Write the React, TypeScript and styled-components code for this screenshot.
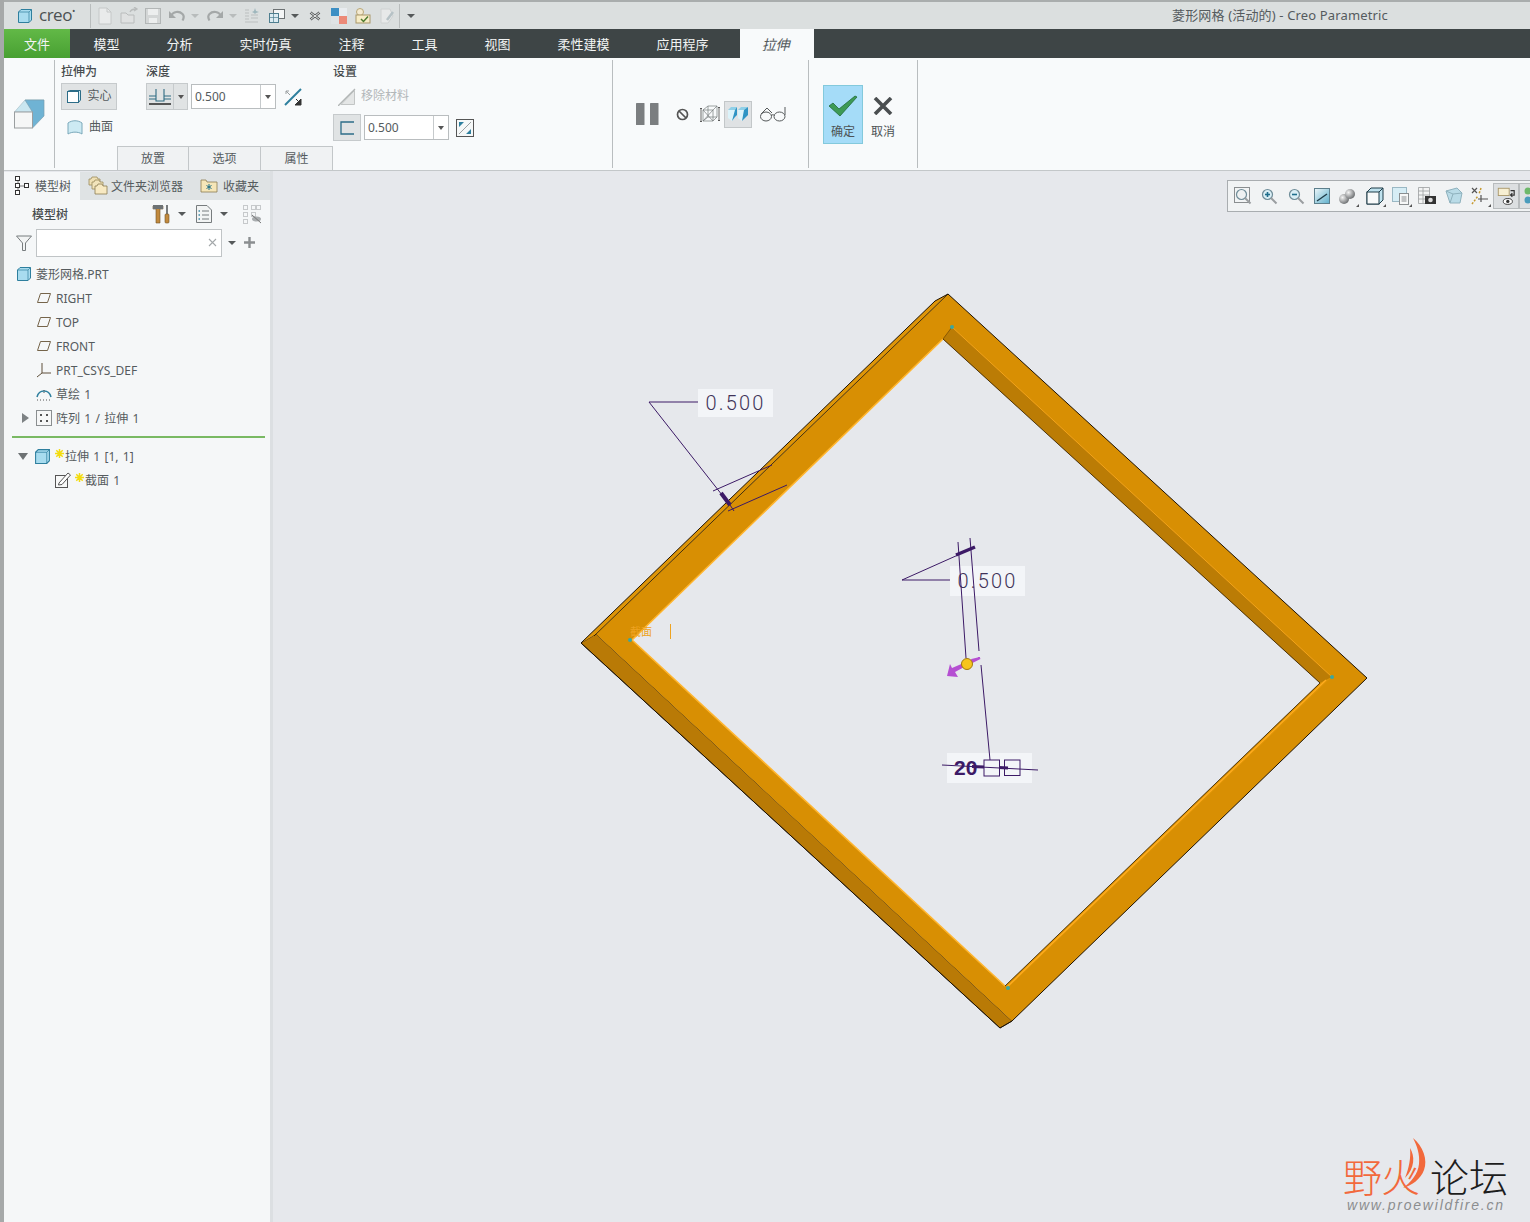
import styled, { createGlobalStyle } from "styled-components"

const FONT = `"Noto Sans", "Noto Sans CJK SC", sans-serif`
const INK = "#3c1a66"

const Global = createGlobalStyle`
    html, body {
        margin: 0;
        padding: 0;
        background: #e6e8ec;
    }
    * {
        box-sizing: border-box;
    }
    svg {
        display: block;
        flex: none;
    }
`

const Page = styled.div`
    width: 1530px;
    height: 1222px;
    display: flex;
    flex-direction: column;
    overflow: hidden;
    border-left: 4px solid #a6a9a9;
    font-family: ${FONT};
    font-size: 12px;
    color: #555b5e;
    background: #e6e8ec;
`

/* title bar */
const TitleBar = styled.div`
    height: 29px;
    flex: none;
    display: flex;
    align-items: center;
    background: #dbdfdf;
    border-top: 2px solid #a9adad;
`
const LogoBox = styled.div`
    width: 87px;
    height: 24px;
    padding-left: 13px;
    display: flex;
    align-items: center;
    gap: 6px;
    border-right: 1px solid #b9bdbd;
`
const LogoText = styled.span`
    font-family: "Open Sans", sans-serif;
    font-size: 17px;
    line-height: 1;
    letter-spacing: -0.5px;
    padding-bottom: 2px;
    color: #4c5152;
`
const LogoDot = styled.sup`
    font-size: 9px;
    line-height: 0;
`
const QuickRow = styled.div`
    display: flex;
    align-items: center;
    padding-left: 2px;
`
const QuickBtn = styled.div<{ $mirror?: boolean }>`
    width: 24px;
    height: 24px;
    display: flex;
    align-items: center;
    justify-content: center;
    transform: ${(p) => (p.$mirror ? "scaleX(-1)" : "none")};
`
const Caret = styled.div<{ $dim?: boolean; $w?: number; $after?: number }>`
    width: ${(p) => p.$w ?? 12}px;
    height: 24px;
    flex: none;
    display: flex;
    align-items: center;
    justify-content: center;
    margin-right: ${(p) => p.$after ?? 2}px;

    &::before {
        content: "";
        border-left: 4px solid transparent;
        border-right: 4px solid transparent;
        border-top: 4px solid ${(p) => (p.$dim ? "#b8bcbc" : "#55595a")};
    }
`
const QuickDivider = styled.div`
    width: 1px;
    height: 24px;
    margin: 0 5px 0 0;
    background: #b9bdbd;
`
const WindowTitle = styled.div`
    margin-left: auto;
    padding: 0 142px 2px 0;
    font-size: 13px;
    letter-spacing: 0.15px;
    color: #555b5e;
`

/* menu */
const MenuBar = styled.div`
    height: 29px;
    flex: none;
    display: flex;
    background: #3e4546;
`
const MenuTab = styled.div<{ $kind?: "file" | "active" }>`
    height: 29px;
    display: flex;
    align-items: center;
    justify-content: center;
    font-size: 13px;
    color: #f2f4f4;
    padding: 0 23.5px;

    ${(p) =>
        p.$kind === "file" &&
        `
        width: 66px;
        padding: 0;
        background: linear-gradient(#62b947, #48a032);
    `}
    ${(p) =>
        p.$kind === "active" &&
        `
        width: 74px;
        padding: 0 2px 0 0;
        margin-left: 7.5px;
        background: #f8fafb;
        color: #555b5e;
        font-size: 14px;
        font-style: italic;
    `}
`

/* ribbon */
const Ribbon = styled.div`
    height: 113px;
    flex: none;
    display: flex;
    padding-top: 2px;
    background: #f8fafb;
    border-bottom: 1px solid #c3c7c9;
`
const RibbonSection = styled.section<{ $w: number }>`
    width: ${(p) => p.$w}px;
    height: 108px;
    flex: none;
    border-right: 1px solid #b9bdbf;
`
const FeatureCell = styled(RibbonSection)`
    display: flex;
    align-items: center;
    padding-left: 10px;
`
const OptionsCell = styled(RibbonSection)`
    display: flex;
    flex-direction: column;
    padding: 5px 0 0 6px;
`
const Groups = styled.div`
    display: flex;
    flex: 1;
`
const Group = styled.div<{ $w?: number }>`
    width: ${(p) => (p.$w ? `${p.$w}px` : "auto")};
    display: flex;
    flex-direction: column;
    gap: 4px;
`
const GroupLabel = styled.div`
    height: 14px;
    line-height: 14px;
    font-size: 12px;
    font-weight: 500;
    color: #474c4e;
`
const ControlRow = styled.div`
    height: 27px;
    display: flex;
    align-items: center;
`
const ToggleBtn = styled.div<{ $w: number; $on?: boolean }>`
    width: ${(p) => p.$w}px;
    height: 27px;
    flex: none;
    display: flex;
    align-items: center;
    justify-content: center;
    gap: 5px;
    font-size: 12px;
    line-height: 14px;
    background: ${(p) => (p.$on ? "#e0e3e4" : "transparent")};
    border: 1px solid ${(p) => (p.$on ? "#c6cacc" : "transparent")};
`
const BtnText = styled.span`
    padding-bottom: 1px;
`
const SplitCaret = styled.div`
    width: 14px;
    height: 27px;
    margin-right: 3px;
    display: flex;
    align-items: center;
    justify-content: center;
    background: #e0e3e4;
    border: 1px solid #c6cacc;
    border-left: 0;

    &::before {
        content: "";
        border-left: 3.5px solid transparent;
        border-right: 3.5px solid transparent;
        border-top: 4px solid #555;
    }
`
const Combo = styled.div<{ $gap?: number; $before?: number }>`
    width: 85px;
    height: 25px;
    flex: none;
    margin-left: ${(p) => p.$before ?? 0}px;
    margin-right: ${(p) => p.$gap ?? 8}px;
    display: flex;
    align-items: center;
    background: #fff;
    border: 1px solid #b9bdbf;
    font-size: 12px;
    color: #555b5e;
`
const ComboValue = styled.div`
    flex: 1;
    padding-left: 3px;
`
const ComboArrow = styled.div`
    width: 15px;
    height: 100%;
    display: flex;
    align-items: center;
    justify-content: center;
    border-left: 1px solid #c6cacc;

    &::before {
        content: "";
        border-left: 3.5px solid transparent;
        border-right: 3.5px solid transparent;
        border-top: 4px solid #555;
    }
`
const PlainOption = styled.div`
    height: 27px;
    display: flex;
    align-items: center;
    gap: 6px;
    padding-left: 6px;
    font-size: 12px;
    line-height: 14px;
`
const DisabledOption = styled(PlainOption)`
    padding-left: 5px;
    gap: 5px;
    color: #b3b7b9;
`
const SheetTabs = styled.div`
    display: flex;
    height: 24px;
    margin: 0 0 -2px 56px;
`
const SheetTab = styled.div`
    width: 72px;
    display: flex;
    align-items: center;
    justify-content: center;
    padding-bottom: 2px;
    font-size: 12px;
    background: #f0f2f3;
    border: 1px solid #c3c7c9;
    border-bottom: 0;

    & + & {
        border-left: 0;
        box-shadow: -1px 0 0 #c3c7c9;
    }
`
const PreviewCell = styled(RibbonSection)`
    display: flex;
    align-items: center;
    padding-left: 22px;
`
const PreviewBtn = styled.div<{ $w: number; $on?: boolean; $before?: number }>`
    width: ${(p) => p.$w}px;
    height: 27px;
    flex: none;
    margin-left: ${(p) => p.$before ?? 0}px;
    display: flex;
    align-items: center;
    justify-content: center;
    background: ${(p) => (p.$on ? "#dfe2e4" : "transparent")};
    border: 1px solid ${(p) => (p.$on ? "#c3c7c9" : "transparent")};
`
const ConfirmCell = styled(RibbonSection)`
    display: flex;
    align-items: center;
    padding-left: 14px;
`
const BigBtn = styled.div<{ $on?: boolean }>`
    width: 40px;
    height: 59px;
    padding-top: 8px;
    display: flex;
    flex-direction: column;
    align-items: center;
    font-size: 12px;
    line-height: 16px;
    color: #4d5356;
    background: ${(p) => (p.$on ? "#a5dcf8" : "transparent")};
    border: 1px solid ${(p) => (p.$on ? "#83c9dc" : "transparent")};
`
const BigIcon = styled.div`
    height: 24px;
    margin-bottom: 6px;
    display: flex;
    align-items: center;
`

/* main area */
const Main = styled.div`
    flex: 1;
    min-height: 0;
    display: flex;
`
const Panel = styled.aside`
    width: 269px;
    flex: none;
    display: flex;
    flex-direction: column;
    background: #f5f7f8;
    border-right: 3px solid #dcdfe2;
`
const PanelTabs = styled.div`
    height: 29px;
    flex: none;
    display: flex;
    align-items: center;
    background: #dfe3e4;
    border-top: 1px solid #e6e8ec;
`
const PanelTab = styled.div<{ $w: number; $on?: boolean; $gap: number }>`
    width: ${(p) => p.$w}px;
    height: 100%;
    display: flex;
    align-items: center;
    gap: ${(p) => p.$gap}px;
    padding-bottom: 1px;
    padding-left: ${(p) => (p.$on ? 10 : 8)}px;
    background: ${(p) => (p.$on ? "#f5f7f8" : "transparent")};
`
const PanelHead = styled.div`
    height: 28px;
    flex: none;
    display: flex;
    align-items: center;
    padding-left: 28px;
`
const HeadTitle = styled.div`
    width: 120px;
    font-weight: 500;
    color: #474c4e;
`
const FilterRow = styled.div`
    height: 29px;
    flex: none;
    display: flex;
    align-items: center;
    padding-left: 12px;
    gap: 4px;
`
const FilterInput = styled.div`
    width: 186px;
    height: 28px;
    display: flex;
    align-items: center;
    justify-content: flex-end;
    padding-right: 4px;
    background: #fff;
    border: 1px solid #c0c4c6;
`
const Tree = styled.div`
    padding-top: 5px;
`
const Row = styled.div<{ $pad: number }>`
    height: 24px;
    display: flex;
    align-items: center;
    padding-left: ${(p) => p.$pad}px;
    gap: 4px;
    font-size: 12px;
    word-spacing: 1.2px;
    white-space: nowrap;
`
const Twisty = styled.div<{ $open?: boolean }>`
    width: 8px;
    height: 10px;
    margin-right: 3px;
    flex: none;
    display: flex;
    align-items: center;
    justify-content: center;

    &::before {
        content: "";
        ${(p) =>
            p.$open
                ? `border-left: 5px solid transparent; border-right: 5px solid transparent; border-top: 7px solid #6d7274;`
                : `border-top: 5px solid transparent; border-bottom: 5px solid transparent; border-left: 7px solid #7d8284;`}
    }
`
const InsertLine = styled.div`
    height: 2px;
    margin: 6px 5px 6px 8px;
    background: #79b963;
`
const Star = styled.span`
    display: flex;
    margin: -6px -3px 0 0;
`

/* canvas */
const Canvas = styled.div`
    flex: 1;
    min-width: 0;
    position: relative;
    background: #e6e8ec;
`
const ViewBar = styled.div`
    position: absolute;
    top: 9px;
    left: 954px;
    right: -4px;
    height: 32px;
    display: flex;
    align-items: center;
    padding-left: 2px;
    overflow: hidden;
    background: #f1f3f4;
    border: 1px solid #a9adb0;
`
const ViewBtn = styled.div<{ $on?: boolean }>`
    width: 26.3px;
    height: 26px;
    flex: none;
    position: relative;
    display: flex;
    align-items: center;
    justify-content: center;
    background: ${(p) => (p.$on ? "#dcdfe1" : "transparent")};
    box-shadow: ${(p) => (p.$on ? "inset 0 0 0 1px #b8bcbe" : "none")};
`
const MenuMark = styled.span`
    position: absolute;
    right: 2px;
    bottom: 2px;
    width: 0;
    height: 0;
    border-left: 3px solid transparent;
    border-bottom: 3px solid #555;
`
const DimLabel = styled.div<{ $x: number; $y: number; $w: number; $h: number }>`
    position: absolute;
    left: ${(p) => p.$x - 273}px;
    top: ${(p) => p.$y - 171}px;
    width: ${(p) => p.$w}px;
    height: ${(p) => p.$h}px;
    display: flex;
    align-items: center;
    justify-content: center;
    background: #f3f5f8;
    font-family: Roboto, sans-serif;
    font-weight: 300;
    font-size: 20px;
    letter-spacing: 2.2px;
    color: #3f3358;
`
const BoldDim = styled(DimLabel)`
    justify-content: flex-start;
    padding-left: 7px;
    font-family: "Liberation Sans", sans-serif;
    font-weight: 700;
    font-size: 21px;
    letter-spacing: 0;
    color: ${INK};
`
const LeaderLayer = styled.svg`
    position: absolute;
    left: 0;
    top: 0;
    pointer-events: none;
`
const SectionTag = styled.div`
    position: absolute;
    left: 357px;
    top: 453px;
    display: flex;
    align-items: center;
    gap: 18px;
    font-size: 11px;
    line-height: 14px;
    color: #eea321;
`
const TagCursor = styled.span`
    width: 1px;
    height: 15px;
    background: #eea321;
`
const Watermark = styled.div`
    position: absolute;
    right: 19px;
    bottom: 9px;
    width: 168px;
    display: flex;
    flex-direction: column;
`
const MarkTitle = styled.div`
    display: flex;
    align-items: center;
    height: 43px;
    padding-top: 3px;
    font-size: 39px;
    font-weight: 300;
    line-height: 40px;
    position: relative;
    white-space: nowrap;
`
const MarkFire = styled.span`
    color: #f2693c;
    letter-spacing: -1px;
    width: 87px;
`
const MarkForum = styled.span`
    color: #1d1d1d;
`
const MarkFlame = styled.div`
    position: absolute;
    left: 52px;
    top: -16px;
`
const MarkUrl = styled.div`
    padding-left: 4px;
    font-family: "Liberation Sans", sans-serif;
    font-style: italic;
    font-size: 14px;
    letter-spacing: 1.8px;
    color: #8b8d8f;
    white-space: nowrap;
`

/* icons */
const CubeMini = ({ size = 16 }: { size?: number }) => (
    <svg width={size} height={size} viewBox="0 0 16 16">
        <path d="M1.500 4 4 1.500H14.500V12L12 14.500H1.500Z" fill="#a8dcef" stroke="#2e7f9e" />
        <path d="M12 14.500V4L14.500 1.500M12 4H1.500" fill="none" stroke="#2e7f9e" strokeWidth=".7" />
    </svg>
)
const Page16 = ({ c = "#c5c8c8" }: { c?: string }) => (
    <svg width="16" height="18" viewBox="0 0 16 18">
        <path d="M2 1H10L14 5V17H2Z" fill="#e9ebeb" stroke={c} />
        <path d="M10 1V5H14" fill="none" stroke={c} />
    </svg>
)
const OpenIcon = () => (
    <svg width="20" height="18" viewBox="0 0 20 18">
        <path d="M2 16V6H7L9 8H15V16Z" fill="#dfe1e1" stroke="#b9bcbc" />
        <path d="M11 5C12 2.500 14 2 17 2M15 0 18 2 15 4" fill="none" stroke="#b9bcbc" strokeWidth="1.300" />
    </svg>
)
const SaveIcon = () => (
    <svg width="16" height="16" viewBox="0 0 16 16">
        <rect x=".5" y=".5" width="15" height="15" fill="#d3d6d6" stroke="#b2b6b6" />
        <rect x="3" y="1" width="10" height="6" fill="#eceeee" />
        <rect x="4" y="10" width="8" height="5" fill="#eceeee" />
    </svg>
)
const UndoIcon = () => (
    <svg width="18" height="14" viewBox="0 0 18 14">
        <path d="M3 7C5 2.500 11 1.500 14.500 5C16 6.500 16 9 14.500 11.500" fill="none" stroke="#a4a8a8" strokeWidth="2.200" />
        <path d="M1 2V9H8Z" fill="#a4a8a8" />
    </svg>
)
const RegenIcon = () => (
    <svg width="18" height="18" viewBox="0 0 18 18">
        <path d="M1 6H5M1 9H5M1 12H5M1 15H14M7 8H14M7 11H14M1 3H5" stroke="#bcbfbf" strokeWidth="1.200" />
        <path d="M11 1 12 4 15 5 12 6 11 7 10 6 8 5 10 4Z" fill="#9fb7bd" />
    </svg>
)
const WindowsIcon = () => (
    <svg width="18" height="16" viewBox="0 0 18 16">
        <rect x="5.500" y="1.500" width="11" height="9" fill="#f4f6f6" stroke="#6d7274" />
        <rect x="1.500" y="5.500" width="9" height="9" fill="#dcecf2" stroke="#4e7f90" />
        <path d="M5.500 5.500V14.500M1.500 9.500H10.500" stroke="#4e7f90" strokeWidth=".7" />
    </svg>
)
const CloseWinIcon = () => (
    <svg width="12" height="10" viewBox="0 0 12 10">
        <path d="M1.500 1.500 10.500 8.500M10.500 1.500 1.500 8.500" stroke="#55595a" strokeWidth="2.600" />
        <path d="M1.500 1.500 10.500 8.500M10.500 1.500 1.500 8.500" stroke="#eceeee" strokeWidth="1" />
    </svg>
)
const AppearanceIcon = () => (
    <svg width="16" height="16" viewBox="0 0 16 16">
        <rect width="8" height="8" fill="#3d8fc4" />
        <rect x="8" width="8" height="8" fill="#e8ecef" />
        <rect y="8" width="8" height="8" fill="#dfe3e5" />
        <rect x="8" y="8" width="8" height="8" fill="#ec8a78" />
    </svg>
)
const ParamsIcon = () => (
    <svg width="18" height="18" viewBox="0 0 18 18">
        <circle cx="6" cy="5" r="3.500" fill="#f4ead0" stroke="#b8a675" />
        <rect x="2" y="8" width="14" height="8" fill="#f7ecc6" stroke="#a9976a" />
        <path d="M7 12 9.500 14.500 14 9.500" fill="none" stroke="#4d7b2f" strokeWidth="1.500" />
    </svg>
)
const DimPageIcon = () => (
    <svg width="18" height="18" viewBox="0 0 18 18">
        <path d="M3 2H12L15 9 10 16H3Z" fill="#e7e9e9" stroke="#cfd2d2" />
        <path d="M9 13 15 5" stroke="#b6c2c6" strokeWidth="2.500" />
    </svg>
)
const BigCube = () => (
    <svg width="32" height="32" viewBox="0 0 32 32">
        <path d="M.5 14 11 2H30L18.500 14Z" fill="#c9e6f0" stroke="#a9c1ca" strokeWidth=".7" />
        <path d="M11 2H30V18L18.500 30V14Z" fill="#6fb3d4" stroke="#7a9fb0" strokeWidth=".7" />
        <rect x=".5" y="14" width="18" height="16" fill="#f5f6f6" stroke="#9a9ea0" />
    </svg>
)
const SolidIcon = () => (
    <svg width="16" height="16" viewBox="0 0 16 16">
        <path d="M12.500 13.500 14.500 11V1.500H3.500L1.500 2.500" fill="#cfeaf4" stroke="#2c6d88" />
        <rect x="1.500" y="2.500" width="11" height="11" fill="#fff" stroke="#2c6d88" />
    </svg>
)
const SurfaceIcon = () => (
    <svg width="16" height="16" viewBox="0 0 16 16">
        <path d="M1 3C5 0 11 0 15 3V14C11 11.500 5 11.500 1 14Z" fill="#cdeaf3" stroke="#7aa8ba" />
    </svg>
)
const DepthIcon = () => (
    <svg width="22" height="20" viewBox="0 0 22 20">
        <path d="M0 9H7M15 9H22M0 12H7M15 12H22M7 2V14H15V2" fill="none" stroke="#2f6c82" strokeWidth="1.100" />
        <path d="M0 17H22" stroke="#333" strokeWidth="1.600" />
    </svg>
)
const FlipIcon = () => (
    <svg width="18" height="18" viewBox="0 0 18 18">
        <path d="M1 17 17 1" stroke="#2e7f9e" strokeWidth="2" />
        <path d="M2 3H5M2 3V6M2 3 6 7" stroke="#9a9ea0" fill="none" />
        <path d="M12 11 16 15M17 11V17H11Z" stroke="#333" fill="#333" />
    </svg>
)
const RemoveIcon = () => (
    <svg width="18" height="18" viewBox="0 0 18 18">
        <path d="M3 16.500H16.500V2.500Z" fill="#e4e6e6" stroke="#c2c5c5" />
        <path d="M0 18 17 1" stroke="#b2b6b6" strokeWidth="1.300" />
    </svg>
)
const ThickenIcon = () => (
    <svg width="16" height="16" viewBox="0 0 16 16">
        <path d="M15 2H2V14H15" fill="none" stroke="#2c6d88" strokeWidth="1.300" />
    </svg>
)
const FlipBoxIcon = () => (
    <svg width="18" height="18" viewBox="0 0 18 18">
        <rect x=".5" y=".5" width="17" height="17" fill="#f6f8f8" stroke="#555" />
        <path d="M3 15 15 3" stroke="#9a9ea0" />
        <path d="M3 3H8L3 8ZM15 15H10L15 10Z" fill="#2e7f9e" />
    </svg>
)
const PauseIcon = () => (
    <svg width="24" height="23" viewBox="0 0 24 23">
        <rect x="1" width="8.500" height="22" rx=".6" fill="#7b7e80" />
        <rect x="15" width="8.500" height="22" rx=".6" fill="#7b7e80" />
    </svg>
)
const NoPreviewIcon = () => (
    <svg width="13" height="13" viewBox="0 0 13 13">
        <circle cx="6.500" cy="6.500" r="5" fill="none" stroke="#555" strokeWidth="1.700" />
        <path d="M3 3 10 10" stroke="#555" strokeWidth="1.700" />
    </svg>
)
const WireIcon = () => (
    <svg width="20" height="18" viewBox="0 0 20 18">
        <path d="M3 5 8 1H17L13 5ZM3 5V16H13V5M13 16 17 12V1M8 1V12H17M8 12 3 16M3 5 13 16M13 5 3 16" fill="none" stroke="#777b7d" strokeWidth=".7" />
        <path d="M1 3V17M19 2V16M0 4 1 3 2 4M0 16 1 17 2 16M18 3 19 2 20 3M18 15 19 16 20 15" fill="none" stroke="#444" strokeWidth=".8" />
    </svg>
)
const SplitCubeIcon = () => (
    <svg width="20" height="16" viewBox="0 0 20 16">
        <path d="M0 4H7V11L4 15 0 12Z" fill="#dcf3fa" />
        <path d="M0 4 3 1H9L7 4Z" fill="#8fd0e8" />
        <path d="M7 4 9 1V9L7 11 4 15Z" fill="#2f94c4" />
        <path d="M10 4H16V11L14 15 10 12Z" fill="#dcf3fa" />
        <path d="M10 4 13 1H20L16 4Z" fill="#8fd0e8" />
        <path d="M16 4 20 1V9L14 15Z" fill="#2f94c4" />
    </svg>
)
const GlassesIcon = () => (
    <svg width="28" height="16" viewBox="0 0 28 16">
        <ellipse cx="7" cy="10.500" rx="5.500" ry="4.500" fill="none" stroke="#55595a" />
        <ellipse cx="20.500" cy="10.500" rx="5.500" ry="4.500" fill="none" stroke="#55595a" />
        <path d="M12 9.500C13.500 8.500 14.500 8.500 15.500 9.500M2 8 8 2 13 7M26 9V1" fill="none" stroke="#55595a" />
    </svg>
)
const CheckIcon = () => (
    <svg width="30" height="22" viewBox="0 0 30 22">
        <path d="M1 11 5 8 11 14 27 1 29 2 12 21Z" fill="#3d9a55" stroke="#1f6a3a" strokeWidth=".8" />
    </svg>
)
const CrossIcon = () => (
    <svg width="20" height="18" viewBox="0 0 20 18">
        <path d="M2 1 18 17M18 1 2 17" stroke="#4a4e50" strokeWidth="3.600" />
    </svg>
)
const ModelTreeIcon = () => (
    <svg width="16" height="19" viewBox="0 0 16 19">
        <path d="M4 5V16M4 10H10" stroke="#555" strokeWidth=".8" />
        <rect x="1.500" y=".5" width="4" height="4" fill="#fff" stroke="#333" />
        <rect x="1.500" y="7.500" width="4" height="4" fill="#fff" stroke="#333" />
        <rect x="1.500" y="14.500" width="4" height="4" fill="#fff" stroke="#333" />
        <rect x="10.500" y="7.500" width="4" height="4" fill="#fff" stroke="#333" />
    </svg>
)
const FoldersIcon = () => (
    <svg width="20" height="19" viewBox="0 0 20 19">
        <path d="M1 9V3H3L4 1H9L10 3H12V9Z" fill="#efe0b4" stroke="#9a8a5c" strokeWidth=".8" />
        <path d="M4 13V6H6L7 4H11L12 6H15V13Z" fill="#f2e4bb" stroke="#9a8a5c" strokeWidth=".8" />
        <path d="M7 18V10H9L10 8H14L15 10H19V18Z" fill="#f7e9c2" stroke="#8c7c50" strokeWidth=".8" />
    </svg>
)
const FavIcon = () => (
    <svg width="18" height="17" viewBox="0 0 18 17">
        <path d="M1 15V3H6L7 5H17V15Z" fill="#f5e6b8" stroke="#8c7c50" strokeWidth=".8" />
        <path d="M9 7V13M6.500 8.500 11.500 11.500M11.500 8.500 6.500 11.500" stroke="#1e6e86" strokeWidth="1" />
    </svg>
)
const ToolsIcon = () => (
    <svg width="18" height="20" viewBox="0 0 18 20">
        <path d="M1 2H11V5H8V19H4V5H1Z" fill="#c28a3e" stroke="#6e5027" strokeWidth=".6" />
        <path d="M1 1H11V5H1Z" fill="#6d7274" />
        <path d="M15 1V10" stroke="#4d5254" strokeWidth="1.500" />
        <rect x="13" y="10" width="4" height="9" rx="1" fill="#c28a3e" stroke="#6e5027" strokeWidth=".6" />
    </svg>
)
const ListDocIcon = () => (
    <svg width="16" height="18" viewBox="0 0 16 18">
        <path d="M.5 .5H11L15.500 5V17.500H.5Z" fill="#f2f4f4" stroke="#777c7e" />
        <path d="M6 6H13M6 10H13M6 14H13" stroke="#777c7e" />
        <path d="M2.500 6H4M2.500 10H4M2.500 14H4" stroke="#3f8ba6" strokeWidth="1.500" />
    </svg>
)
const HiddenTreeIcon = () => (
    <svg width="20" height="20" viewBox="0 0 20 20">
        <g fill="none" stroke="#c6c9cb">
            <rect x="1.500" y="1.500" width="4" height="4" />
            <rect x="1.500" y="8.500" width="4" height="4" />
            <rect x="1.500" y="15.500" width="4" height="4" />
            <rect x="9.500" y="1.500" width="4" height="4" />
            <rect x="9.500" y="8.500" width="4" height="4" />
            <rect x="14.500" y="1.500" width="4" height="4" />
        </g>
        <ellipse cx="14.500" cy="15" rx="4.500" ry="2.500" fill="#a9adaf" />
        <path d="M10 11 19 19" stroke="#777" />
    </svg>
)
const FunnelIcon = () => (
    <svg width="16" height="16" viewBox="0 0 16 16">
        <path d="M.5 1H15.500L9.500 8V15.500H6.500V8Z" fill="#f2f4f4" stroke="#777c7e" />
    </svg>
)
const ClearIcon = () => (
    <svg width="9" height="9" viewBox="0 0 9 9">
        <path d="M1 1 8 8M8 1 1 8" stroke="#a4a8aa" strokeWidth="1.100" />
    </svg>
)
const PlusIcon = () => (
    <svg width="11" height="11" viewBox="0 0 11 11">
        <path d="M5.500 0V11M0 5.500H11" stroke="#8a8e90" strokeWidth="2.400" />
    </svg>
)
const PlaneIcon = () => (
    <svg width="16" height="12" viewBox="0 0 16 12">
        <path d="M4.500 1.500H14.500L11.500 10.500H1.500Z" fill="none" stroke="#75644a" strokeWidth="1" />
    </svg>
)
const CsysIcon = () => (
    <svg width="16" height="16" viewBox="0 0 16 16">
        <path d="M6 1V11L1 15M6 11H15" fill="none" stroke="#5e4f3a" strokeWidth="1" />
    </svg>
)
const SketchIcon = () => (
    <svg width="16" height="14" viewBox="0 0 16 14">
        <path d="M1 10C3 2 13 2 15 10" fill="none" stroke="#2e7f9e" strokeWidth="1.500" />
        <path d="M1 13H15" stroke="#555" strokeDasharray="1 2" />
        <path d="M8 3V6" stroke="#555" strokeDasharray="1 1" />
    </svg>
)
const PatternIcon = () => (
    <svg width="16" height="16" viewBox="0 0 16 16">
        <rect x=".5" y=".5" width="15" height="15" fill="#f6f7f7" stroke="#8a8e90" />
        <path d="M4 4H6V6H4ZM10 4H12V6H10ZM4 10H6V12H4ZM10 10H12V12H10Z" fill="#555" />
    </svg>
)
const SectionIcon = () => (
    <svg width="16" height="16" viewBox="0 0 16 16">
        <rect x=".5" y="3.500" width="12" height="12" fill="#f8f9f9" stroke="#555" />
        <path d="M4 11 13 1 15.500 3 7 12.500 3.500 13Z" fill="#fff" stroke="#555" />
    </svg>
)
const SmallStar = () => (
    <svg width="9" height="9" viewBox="0 0 9 9">
        <path d="M4.500 0V9M0 4.500H9M1.300 1.300 7.700 7.700M7.700 1.300 1.300 7.700" stroke="#f3dc10" strokeWidth="1.500" />
    </svg>
)
const ZoomIcon = ({ kind }: { kind: "fit" | "in" | "out" }) => (
    <svg width="18" height="18" viewBox="0 0 18 18">
        {kind === "fit" && <rect x=".5" y=".5" width="15" height="15" fill="#f2f4f5" stroke="#8a8e90" />}
        <circle cx="7.500" cy="7.500" r="5" fill={kind === "fit" ? "#eef1f2" : "#d9eef5"} stroke="#6f8c98" strokeWidth="1.200" />
        <path d="M11 11 16.500 16.500" stroke="#9a9ea0" strokeWidth="2" />
        {kind !== "fit" && <path d="M5 7.500H10" stroke="#1f6e8c" strokeWidth="1.600" />}
        {kind === "in" && <path d="M7.500 5V10" stroke="#1f6e8c" strokeWidth="1.600" />}
    </svg>
)
const RefitIcon = () => (
    <svg width="16" height="16" viewBox="0 0 16 16">
        <defs>
            <linearGradient id="rf" x1="0" y1="0" x2="1" y2="1">
                <stop offset="0" stopColor="#eef7fa" />
                <stop offset="1" stopColor="#5fb0cc" />
            </linearGradient>
        </defs>
        <rect x=".5" y=".5" width="15" height="15" fill="url(#rf)" stroke="#5d7f8c" />
        <path d="M3 13 13 6" stroke="#1f3c48" strokeWidth="1.400" />
    </svg>
)
const ShadeIcon = () => (
    <svg width="20" height="18" viewBox="0 0 20 18">
        <defs>
            <radialGradient id="sh" cx=".35" cy=".35" r=".7">
                <stop offset="0" stopColor="#f4f4f4" />
                <stop offset="1" stopColor="#6a6d6f" />
            </radialGradient>
        </defs>
        <circle cx="6" cy="12" r="5" fill="url(#sh)" />
        <circle cx="12" cy="7" r="5" fill="url(#sh)" />
    </svg>
)
const ViewCubeIcon = () => (
    <svg width="18" height="18" viewBox="0 0 18 18">
        <path d="M1 5 5 1H17V13L13 17H1Z" fill="#bfe2ee" stroke="#1f3c48" />
        <rect x="1" y="5" width="12" height="12" fill="#f8fafa" stroke="#1f3c48" />
        <path d="M13 5 17 1" stroke="#1f3c48" />
    </svg>
)
const SavedViewIcon = () => (
    <svg width="18" height="18" viewBox="0 0 18 18">
        <rect x=".5" y=".5" width="14" height="14" fill="#d6edf5" stroke="#9ab8c4" />
        <rect x="7.500" y="6.500" width="9" height="11" fill="#f7f8f8" stroke="#8a8e90" />
        <path d="M9.500 10H14.500M9.500 12H14.500M9.500 14H14.500" stroke="#8a8e90" />
    </svg>
)
const CameraTableIcon = () => (
    <svg width="18" height="18" viewBox="0 0 18 18">
        <path d="M.5 .5H11.500V16.500H.5ZM.5 4H11.500M.5 8H11.500M.5 12H11.500M5 .5V16.500" fill="#f3f4f4" stroke="#9a9ea0" strokeWidth=".8" />
        <rect x="7" y="9" width="11" height="8" fill="#333" />
        <circle cx="12.500" cy="13" r="2.300" fill="#ddd" />
    </svg>
)
const GlassCubeIcon = () => (
    <svg width="18" height="18" viewBox="0 0 18 18">
        <path d="M1 4 12 1 17 6 15 16 5 16Z" fill="#b9dbe7" stroke="#8fb2be" />
        <path d="M1 4 8 7 17 6M8 7 5 16" fill="none" stroke="#8fb2be" />
    </svg>
)
const DatumIcon = () => (
    <svg width="20" height="20" viewBox="0 0 20 20">
        <path d="M2 2 7 7M7 2 2 7" stroke="#555" strokeWidth="1.200" />
        <path d="M2 18 8 10M11 2 9 8" stroke="#c69a30" strokeWidth="1.500" strokeDasharray="2 1.500" />
        <path d="M11 9V16M8 13H18" stroke="#555" strokeWidth="1.200" />
    </svg>
)
const DisplayIcon = () => (
    <svg width="20" height="20" viewBox="0 0 22 22">
        <rect x="2.500" y="2.500" width="12" height="8" fill="#f7efd2" stroke="#a9976a" />
        <path d="M16 5H20V10H17M18 8 16 10 18 12" fill="none" stroke="#333" strokeWidth="1.300" />
        <ellipse cx="13" cy="17" rx="5" ry="3.200" fill="#fff" stroke="#333" />
        <circle cx="13" cy="17" r="1.800" fill="#333" />
    </svg>
)
const ExtraIcon = () => (
    <svg width="18" height="18" viewBox="0 0 18 18">
        <circle cx="5" cy="4" r="3.500" fill="#6db86a" />
        <circle cx="5" cy="13" r="3.500" fill="#4a9cbc" />
    </svg>
)
const Flame = () => (
    <svg width="34" height="52" viewBox="0 0 34 52">
        <path d="M18 0C28 8 33 22 29 32C26 41 16 48 8 50C16 44 23 36 24 26C25 16 22 8 18 0Z" fill="#f2693c" />
        <path d="M15 10C20 18 20 30 10 40C14 30 16 20 15 10Z" fill="#f2693c" />
    </svg>
)

/* the part as it sits in the graphics window */
const PartView = () => (
    <svg width="1257" height="1051" viewBox="273 171 1257 1051">
        {/* walls */}
        <polygon points="581,643 596,634 1012,1021 1000,1028" fill="#b97a06" stroke="#2a1a05" strokeWidth=".8" />
        <polygon points="581,643 935,301 948,294 596,634" fill="#de9508" />
        {/* front face */}
        <path
            d="M596,634 L948,294 L1367,678 L1012,1021 Z M632,640 L1005,986 L1320,683 L943,339 Z"
            fill="#d88f03"
            fillRule="evenodd"
        />
        <polygon points="943,339 952,327 1332,677 1320,683" fill="#bb7c05" />
        <polygon points="1005,986 1008,988 1332,677 1320,683" fill="#dd9406" />
        {/* highlights */}
        <path d="M1326,680 L1007,987" stroke="#ffab1f" strokeWidth="1.400" fill="none" />
        <path d="M632,640 L943,339" stroke="#ffb52e" strokeWidth="1.600" fill="none" />
        <path d="M632,640 L1005,986" stroke="#ffb52e" strokeWidth="1.600" fill="none" />
        <path d="M943,339 L1320,683" stroke="#2a1a05" strokeWidth=".8" fill="none" />
        <path d="M1005,986 L1320,683" stroke="#2a1a05" strokeWidth=".8" fill="none" />
        <path d="M952,327 L1332,677" stroke="#f2a31c" strokeWidth="1" fill="none" />
        {/* edges */}
        <path
            d="M581,643 L935,301 L948,294 L1367,678 L1012,1021 L1000,1028 L581,643"
            stroke="#1d1204"
            strokeWidth="1"
            fill="none"
        />
        <path d="M594,636 L948,294" stroke="#1d1204" strokeWidth=".8" fill="none" />
        <path d="M943,339 L952,327" stroke="#7a4c02" strokeWidth=".8" fill="none" />
        {[
            [952, 327],
            [1332, 677],
            [1008, 988],
            [630, 640],
        ].map(([x, y]) => (
            <circle key={x} cx={x} cy={y} r="2" fill="#3aa7a0" />
        ))}
    </svg>
)

/* dimension leaders run over the value boxes */
const Leaders = () => (
    <LeaderLayer width="1257" height="1051" viewBox="273 171 1257 1051">
        <g fill="none" stroke={INK} strokeWidth="1">
            <path d="M649,402 H698 M649,402 L726,500 M713,491 L772,465 M728,511 L787,485 M730,505 L734,511" />
            <path d="M721,493 L730,505" strokeWidth="4" />
            <path d="M902,580 H950 M902,580 L958,555 M958,542 L966,658 M970,538 L979,651 M981,665 L990,760" />
            <path d="M956,555 L975,547" strokeWidth="3.500" />
            <path d="M942,765 L1038,770" />
            <path d="M972,766.500 L984,767 M999,767.500 L1008,768" strokeWidth="3" />
            <rect x="984" y="760" width="15.500" height="16" />
            <rect x="1004.500" y="760" width="15.500" height="15.500" />
        </g>
        <path d="M947,676 L958,677 L955,672 L968,665 L966,662 L952,668 L950,664 Z" fill="#b54fd2" />
        <path d="M970,663 L980,658 L972,660 Z" fill="#b54fd2" stroke="#b54fd2" strokeWidth="2" />
        <circle cx="967" cy="664" r="5.500" fill="#f6c51d" stroke="#a27a0c" strokeWidth="1" />
    </LeaderLayer>
)

const tabs = ["模型", "分析", "实时仿真", "注释", "工具", "视图", "柔性建模", "应用程序"]

export default function App() {
    return (
        <>
            <Global />
            <Page>
                <TitleBar>
                    <LogoBox>
                        <CubeMini />
                        <LogoText>creo<LogoDot>•</LogoDot></LogoText>
                    </LogoBox>
                    <QuickRow>
                        <QuickBtn><Page16 /></QuickBtn>
                        <QuickBtn><OpenIcon /></QuickBtn>
                        <QuickBtn><SaveIcon /></QuickBtn>
                        <QuickBtn><UndoIcon /></QuickBtn>
                        <Caret $dim />
                        <QuickBtn $mirror><UndoIcon /></QuickBtn>
                        <Caret $dim />
                        <QuickBtn><RegenIcon /></QuickBtn>
                        <QuickBtn><WindowsIcon /></QuickBtn>
                        <Caret />
                        <QuickBtn><CloseWinIcon /></QuickBtn>
                        <QuickBtn><AppearanceIcon /></QuickBtn>
                        <QuickBtn><ParamsIcon /></QuickBtn>
                        <QuickBtn><DimPageIcon /></QuickBtn>
                        <QuickDivider />
                        <Caret />
                    </QuickRow>
                    <WindowTitle>菱形网格 (活动的) - Creo Parametric</WindowTitle>
                </TitleBar>

                <MenuBar>
                    <MenuTab $kind="file">文件</MenuTab>
                    {tabs.map((t) => (
                        <MenuTab key={t}>{t}</MenuTab>
                    ))}
                    <MenuTab $kind="active">拉伸</MenuTab>
                </MenuBar>

                <Ribbon>
                    <FeatureCell $w={51}>
                        <BigCube />
                    </FeatureCell>
                    <OptionsCell $w={558}>
                        <Groups>
                            <Group $w={85}>
                                <GroupLabel>拉伸为</GroupLabel>
                                <ToggleBtn $w={56} $on>
                                    <SolidIcon />
                                    <BtnText>实心</BtnText>
                                </ToggleBtn>
                                <PlainOption>
                                    <SurfaceIcon />
                                    <BtnText>曲面</BtnText>
                                </PlainOption>
                            </Group>
                            <Group $w={187}>
                                <GroupLabel>深度</GroupLabel>
                                <ControlRow>
                                    <ToggleBtn $w={28} $on>
                                        <DepthIcon />
                                    </ToggleBtn>
                                    <SplitCaret />
                                    <Combo>
                                        <ComboValue>0.500</ComboValue>
                                        <ComboArrow />
                                    </Combo>
                                    <FlipIcon />
                                </ControlRow>
                            </Group>
                            <Group>
                                <GroupLabel>设置</GroupLabel>
                                <DisabledOption>
                                    <RemoveIcon />
                                    <BtnText>移除材料</BtnText>
                                </DisabledOption>
                                <ControlRow>
                                    <ToggleBtn $w={28} $on>
                                        <ThickenIcon />
                                    </ToggleBtn>
                                    <Combo $gap={7} $before={3}>
                                        <ComboValue>0.500</ComboValue>
                                        <ComboArrow />
                                    </Combo>
                                    <FlipBoxIcon />
                                </ControlRow>
                            </Group>
                        </Groups>
                        <SheetTabs>
                            <SheetTab>放置</SheetTab>
                            <SheetTab>选项</SheetTab>
                            <SheetTab>属性</SheetTab>
                        </SheetTabs>
                    </OptionsCell>
                    <PreviewCell $w={196}>
                        <PauseIcon />
                        <PreviewBtn $w={22} $before={12}><NoPreviewIcon /></PreviewBtn>
                        <PreviewBtn $w={28} $before={3}><WireIcon /></PreviewBtn>
                        <PreviewBtn $w={28} $on><SplitCubeIcon /></PreviewBtn>
                        <PreviewBtn $w={36} $before={3}><GlassesIcon /></PreviewBtn>
                    </PreviewCell>
                    <ConfirmCell $w={109}>
                        <BigBtn $on>
                            <BigIcon><CheckIcon /></BigIcon>
                            确定
                        </BigBtn>
                        <BigBtn>
                            <BigIcon><CrossIcon /></BigIcon>
                            取消
                        </BigBtn>
                    </ConfirmCell>
                </Ribbon>

                <Main>
                    <Panel>
                        <PanelTabs>
                            <PanelTab $w={76} $on $gap={5}>
                                <ModelTreeIcon />
                                模型树
                            </PanelTab>
                            <PanelTab $w={112} $gap={3}>
                                <FoldersIcon />
                                文件夹浏览器
                            </PanelTab>
                            <PanelTab $w={78} $gap={5}>
                                <FavIcon />
                                收藏夹
                            </PanelTab>
                        </PanelTabs>
                        <PanelHead>
                            <HeadTitle>模型树</HeadTitle>
                            <ToolsIcon />
                            <Caret $w={24} />
                            <ListDocIcon />
                            <Caret $w={24} $after={6} />
                            <HiddenTreeIcon />
                        </PanelHead>
                        <FilterRow>
                            <FunnelIcon />
                            <FilterInput>
                                <ClearIcon />
                            </FilterInput>
                            <Caret $w={12} />
                            <PlusIcon />
                        </FilterRow>
                        <Tree>
                            <Row $pad={12}>
                                <CubeMini size={16} />
                                菱形网格.PRT
                            </Row>
                            <Row $pad={32}><PlaneIcon />RIGHT</Row>
                            <Row $pad={32}><PlaneIcon />TOP</Row>
                            <Row $pad={32}><PlaneIcon />FRONT</Row>
                            <Row $pad={32}><CsysIcon />PRT_CSYS_DEF</Row>
                            <Row $pad={32}><SketchIcon />草绘 1</Row>
                            <Row $pad={17}>
                                <Twisty />
                                <PatternIcon />
                                阵列 1 / 拉伸 1
                            </Row>
                            <InsertLine />
                            <Row $pad={15}>
                                <Twisty $open />
                                <CubeMini size={17} />
                                <Star><SmallStar /></Star>
                                拉伸 1 [1, 1]
                            </Row>
                            <Row $pad={51}>
                                <SectionIcon />
                                <Star><SmallStar /></Star>
                                截面 1
                            </Row>
                        </Tree>
                    </Panel>

                    <Canvas>
                        <PartView />
                        <ViewBar>
                            <ViewBtn><ZoomIcon kind="fit" /></ViewBtn>
                            <ViewBtn><ZoomIcon kind="in" /></ViewBtn>
                            <ViewBtn><ZoomIcon kind="out" /></ViewBtn>
                            <ViewBtn><RefitIcon /></ViewBtn>
                            <ViewBtn><ShadeIcon /><MenuMark /></ViewBtn>
                            <ViewBtn><ViewCubeIcon /><MenuMark /></ViewBtn>
                            <ViewBtn><SavedViewIcon /><MenuMark /></ViewBtn>
                            <ViewBtn><CameraTableIcon /></ViewBtn>
                            <ViewBtn><GlassCubeIcon /></ViewBtn>
                            <ViewBtn><DatumIcon /><MenuMark /></ViewBtn>
                            <ViewBtn $on><DisplayIcon /></ViewBtn>
                            <ViewBtn $on><ExtraIcon /></ViewBtn>
                        </ViewBar>
                        <DimLabel $x={698} $y={389} $w={75} $h={28}>0.500</DimLabel>
                        <DimLabel $x={950} $y={566} $w={75} $h={30}>0.500</DimLabel>
                        <BoldDim $x={947} $y={753} $w={85} $h={30}>20</BoldDim>
                        <Leaders />
                        <SectionTag>
                            截面
                            <TagCursor />
                        </SectionTag>
                        <Watermark>
                            <MarkTitle>
                                <MarkFire>野火</MarkFire>
                                <MarkForum>论坛</MarkForum>
                                <MarkFlame><Flame /></MarkFlame>
                            </MarkTitle>
                            <MarkUrl>www.proewildfire.cn</MarkUrl>
                        </Watermark>
                    </Canvas>
                </Main>
            </Page>
        </>
    )
}
